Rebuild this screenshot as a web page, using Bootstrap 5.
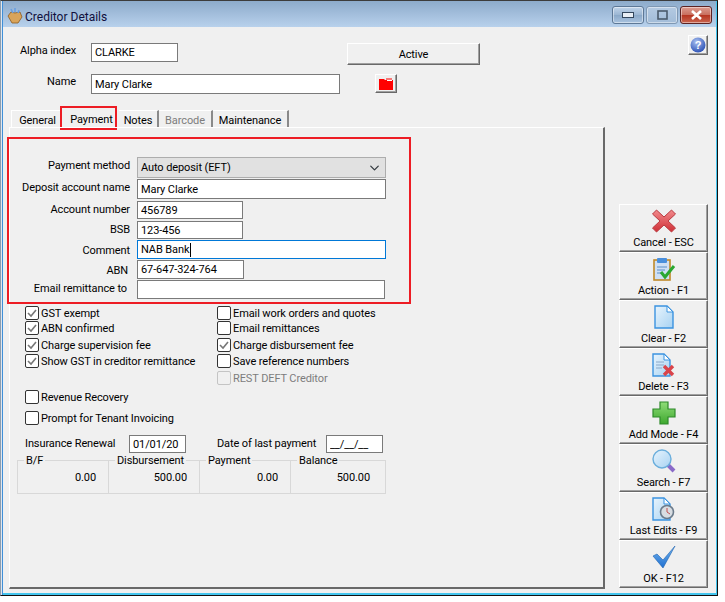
<!DOCTYPE html>
<html lang="en"><head><meta charset="utf-8"><title>Creditor Details</title>
<link rel="stylesheet" href="https://cdn.jsdelivr.net/npm/bootstrap@5.3.0/dist/css/bootstrap.min.css">
<style>
html,body{background:#fff;margin:0;height:602px;overflow:hidden}
body{font:11px/14px Roboto,"Liberation Sans",Arial,sans-serif;color:#000;letter-spacing:-.1px}
.win{background:#f0f0f0;border-top:1px solid #3c3c3c;border-right:1px solid #111;border-bottom:1px solid #111;border-left:1px solid #8a9db0;box-shadow:inset 1px 0 0 #dfe6ee,inset 2px 0 0 #3f8fd8,inset -1px 0 0 #43c5ee,inset 0 -2px 0 #43c5ee;box-sizing:content-box;width:716px;height:594px}
.tbar{flex:none;height:26px;background:linear-gradient(#8dabcb,#b8d1ec);padding:2px 0 0 3px;gap:1px;font-size:12px;letter-spacing:0;color:#10103c;margin-left:2px;margin-right:1px}
.tbar>svg{margin-top:2px}
.ttl{padding-top:4px}
.wbtn{width:32px;height:18px;border:1px solid #5d7896;border-radius:3px;background:linear-gradient(#c0d4ea 0,#9ab5d2 50%,#8aa8c8 50%,#a9c3df);box-shadow:inset 0 0 0 1px rgba(255,255,255,.45);margin-right:2px}
.wbtn.mx{background:linear-gradient(#b4cae2,#a2bcd8);border-color:#7f98b3}
.wbtn.cl{border-color:#5c2222;background:linear-gradient(#dd9c90 0,#c86e5e 50%,#b5331f 50%,#c9654f);margin-right:0}
.client{padding-left:2px;height:566px}
.client>*{flex:none}
.lab{width:73px;text-align:right;padding-top:1px}
.inp.form-control,.inp.form-select{border:1px solid #7a7a7a;border-radius:0;padding:0 0 0 3px;font-size:11px;letter-spacing:-.1px;line-height:14px;min-height:0;color:#000;background-color:#fff;box-shadow:none}
.inp.form-select{background-color:#e1e1e1;border-color:#adadad;padding-left:3px;background-position:right 4px center;background-size:13px 10px;height:21px}
.inp.form-control.focused{border-color:#0078d7;background:linear-gradient(#000,#000) no-repeat 52px 2px/1px 14px #fff}
.winbtn.btn{border-radius:0;padding:0;font-size:11px;letter-spacing:-.1px;line-height:14px;color:#000;background:#f0f0f0;border:1px solid;border-color:#fff #696969 #696969 #fff;box-shadow:inset -1px -1px 0 #a0a0a0}
.ab.btn{width:133px;height:22px;padding-top:1px}
.fold{width:22px;height:19px;margin-left:35px}
.help{width:20px;height:20px;margin:8px 9px 0 0}
.tabs{height:19px;padding-left:8px;margin-top:14px}
.tabs .nav-link{padding:1px 0 0;border:0;border-radius:0;color:#000;height:18px;line-height:18px;background:#f0f0f0;font-size:11px;border-right:2px solid #8a8a8a;border-top:1px solid #fff;text-align:center;margin-top:2px}
.tabs .nav-link.disabled{color:#7d7d7d}
.tabs .nav-item{margin:0}
.t1 .nav-link{width:49px;border-right:0;border-left:1px solid #fff;padding-left:3px}
.t2 .nav-link{width:53px;outline:2px solid #ed1c24;height:20px;margin:0 4px 0 2px;border-right:0;border-top:0;line-height:22px;padding-left:6px}
.t3 .nav-link{width:40px}.t4 .nav-link{width:54px}.t5 .nav-link{width:76px}
.pane{width:596px;height:462px;margin-left:6px;border-top:1px solid #fff;border-left:1px solid #fff;border-right:2px solid #696969;border-bottom:2px solid #696969}
.frame{margin-left:-3px;margin-top:9px;width:404px;height:167px;border:2px solid #ed1c24;padding-top:18px}
.flab{width:122px;text-align:right;flex:none;padding:2px 1px 0 0;white-space:nowrap}
.flab.dn{padding-top:4px}
.flab.e3{padding-right:3px}
.flab.e4{padding-right:4px}
.f{margin-left:6px}
.w250{width:249px}.w106{width:106px}
.cks{padding-left:15px}
.ck{height:16px;white-space:nowrap;padding-top:2px}
.ck .form-check-input{width:14px;height:14px;margin:-2px 2px 0 0;border:1px solid #333;border-radius:2px;background-color:#fff;float:none;flex:none;box-shadow:none}
.ck .form-check-input:checked{background-color:#fff;border-color:#333;background-size:12px;background-image:url("data:image/svg+xml,%3csvg xmlns='http://www.w3.org/2000/svg' viewBox='0 0 12 12'%3e%3cpath d='M2 6l3 3 5-6' fill='none' stroke='%23777' stroke-width='1.6'/%3e%3c/svg%3e")}
.ck.up{margin-top:-1px}
.ck.dn1{margin-top:1px}
.ck.off{color:#7d7d7d}
.ck.off .form-check-input{border-color:#c4c4c4;opacity:1;background-color:#f0f0f0}
.ckcol{width:192px}
.dates{margin-top:9px;padding-left:15px;height:18px;white-space:nowrap}
.dlab{padding-top:2px}
.dt{width:57px;height:18px;padding-top:2px}
.grp{display:grid;grid-template-columns:repeat(4,91px);margin:7px 0 0 7px;width:369px;height:34px;border:1px solid #d8d8d8}
.cell{border-right:1px solid #d8d8d8;position:relative;text-align:right;padding:10px 12px 0 0}
.cell:last-child{border-right:0}
.lg{position:absolute;left:6px;top:-7px;background:#f0f0f0;padding:0 2px;line-height:14px}
.side{margin-left:14px;padding-bottom:1px}
.sb.btn{width:89px;height:48px;display:flex;flex-direction:column;align-items:center;justify-content:flex-end;padding:0 0 1px;border-radius:0}
.sb svg{flex:none;margin-bottom:3px}
</style></head><body>
<div class="win d-flex flex-column">
<div class="tbar d-flex align-items-center">
<svg width="18" height="18" viewBox="0 0 18 18"><path d="M2 9l3-4 4 1 5-1 2 5-4 6H6z" fill="#d9a45a" stroke="#8a5a20" stroke-width=".8"/><path d="M5 2l2 4M9 1v4M13 3l-1 3" stroke="#6a9fe0" stroke-width="1.6"/></svg>
<span class="ttl">Creditor Details</span>
<div class="ms-auto d-flex gap-0 align-items-center pe-1">
<div class="wbtn d-flex align-items-center justify-content-center"><svg width="12" height="6"><rect x=".5" y=".5" width="11" height="5" fill="#e8eef5" stroke="#33465c"/></svg></div>
<div class="wbtn mx d-flex align-items-center justify-content-center"><svg width="11" height="10"><rect x="1" y="1" width="9" height="8" fill="none" stroke="#4a5a6c" stroke-width="1.6"/></svg></div>
<div class="wbtn cl d-flex align-items-center justify-content-center"><svg width="13" height="10"><path d="M2 1l9 8M11 1l-9 8" stroke="#fff" stroke-width="2.6"/></svg></div>
</div></div>
<div class="client d-flex flex-column">
<div class="d-flex">
<div class="flex-grow-1">
<div class="d-flex pt-3">
<div class="lab">Alpha index</div>
<input class="form-control inp" style="width:87px;height:19px;margin-left:15px" value="CLARKE">
<button class="btn winbtn ab" style="margin-left:169px">Active</button>
</div>
<div class="d-flex" style="margin-top:9px">
<div class="lab">Name</div>
<input class="form-control inp" style="width:249px;height:20px;margin-left:15px" value="Mary Clarke">
<button class="btn winbtn fold d-flex align-items-center justify-content-center"><svg width="16" height="14" viewBox="0 0 16 14"><path d="M1 2h5l1 1h8v10H1z" fill="#f00"/><path d="M8 2h6" stroke="#f00" stroke-width="1"/><path d="M9 3.5h5" stroke="#fff" stroke-width="1"/></svg></button>
</div>
</div>
<button class="btn winbtn help d-flex align-items-center justify-content-center"><svg width="16" height="16" viewBox="0 0 16 16"><defs><radialGradient id="hb" cx=".4" cy=".3" r=".8"><stop offset="0" stop-color="#a9c0f0"/><stop offset="1" stop-color="#1f46b0"/></radialGradient></defs><circle cx="8" cy="8" r="7.5" fill="url(#hb)"/><text x="8" y="12" text-anchor="middle" font-size="11" font-weight="700" fill="#fff" font-family="Liberation Sans">?</text></button>
</div>
<ul class="nav tabs flex-nowrap">
<li class="nav-item t1"><a class="nav-link" href="#">General</a></li>
<li class="nav-item t2"><a class="nav-link" href="#">Payment</a></li>
<li class="nav-item t3"><a class="nav-link" href="#">Notes</a></li>
<li class="nav-item t4"><a class="nav-link disabled" href="#">Barcode</a></li>
<li class="nav-item t5"><a class="nav-link" href="#">Maintenance</a></li>
</ul>
<div class="d-flex">
<div class="pane">
<div class="frame">
<div class="d-flex" style="height:22px"><div class="flab">Payment method</div><select class="form-select inp f w250"><option>Auto deposit (EFT)</option></select></div>
<div class="d-flex" style="height:22px"><div class="flab">Deposit account name</div><input class="form-control inp f w250" style="height:20px" value="Mary Clarke"></div>
<div class="d-flex" style="height:20px"><div class="flab">Account number</div><input class="form-control inp f w106" style="height:18px" value="456789"></div>
<div class="d-flex" style="height:19px"><div class="flab">BSB</div><input class="form-control inp f w106" style="height:18px" value="123-456"></div>
<div class="d-flex" style="height:20px"><div class="flab dn">Comment</div><input class="form-control inp f w250 focused" style="height:19px" value="NAB Bank"></div>
<div class="d-flex" style="height:20px"><div class="flab dn e3">ABN</div><input class="form-control inp f" style="height:19px;width:107px" value="67-647-324-764"></div>
<div class="d-flex" style="height:20px"><div class="flab e4">Email remittance to</div><input class="form-control inp f" style="height:19px;width:248px" value=""></div>
</div>
<div class="d-flex cks" style="margin-top:1px">
<div class="ckcol">
<label class="ck d-flex align-items-center"><input type="checkbox" class="form-check-input" checked>GST exempt</label>
<label class="ck up d-flex align-items-center"><input type="checkbox" class="form-check-input" checked>ABN confirmed</label>
<label class="ck dn1 d-flex align-items-center"><input type="checkbox" class="form-check-input" checked>Charge supervision fee</label>
<label class="ck d-flex align-items-center"><input type="checkbox" class="form-check-input" checked>Show GST in creditor remittance</label>
</div>
<div>
<label class="ck d-flex align-items-center"><input type="checkbox" class="form-check-input">Email work orders and quotes</label>
<label class="ck up d-flex align-items-center"><input type="checkbox" class="form-check-input">Email remittances</label>
<label class="ck dn1 d-flex align-items-center"><input type="checkbox" class="form-check-input" checked>Charge disbursement fee</label>
<label class="ck d-flex align-items-center"><input type="checkbox" class="form-check-input">Save reference numbers</label>
<label class="ck off dn1 d-flex align-items-center"><input type="checkbox" class="form-check-input" disabled>REST DEFT Creditor</label>
</div>
</div>
<div class="cks" style="margin-top:3px">
<label class="ck d-flex align-items-center"><input type="checkbox" class="form-check-input">Revenue Recovery</label>
<label class="ck d-flex align-items-center" style="margin-top:5px"><input type="checkbox" class="form-check-input">Prompt for Tenant Invoicing</label>
</div>
<div class="d-flex dates">
<div class="dlab" style="width:104px">Insurance Renewal</div>
<input class="form-control inp dt" value="01/01/20">
<div class="dlab" style="width:109px;margin-left:31px">Date of last payment</div>
<input class="form-control inp dt" value="__/__/__">
</div>
<div class="grp">
<div class="cell"><span class="lg">B/F</span>0.00</div>
<div class="cell"><span class="lg">Disbursement</span>500.00</div>
<div class="cell"><span class="lg">Payment</span>0.00</div>
<div class="cell"><span class="lg">Balance</span>500.00</div>
</div>
</div>
<div class="side d-flex flex-column justify-content-end">
<button class="btn winbtn sb"><svg width="24" height="24" viewBox="0 0 24 24"><defs><linearGradient id="gr" x1="0" y1="0" x2="0" y2="1"><stop offset="0" stop-color="#f28a8c"/><stop offset="1" stop-color="#cf2f36"/></linearGradient><linearGradient id="gg" x1="0" y1="0" x2="0" y2="1"><stop offset="0" stop-color="#8fdc78"/><stop offset="1" stop-color="#3ea82e"/></linearGradient><linearGradient id="gb" x1="0" y1="0" x2="0" y2="1"><stop offset="0" stop-color="#75b6f0"/><stop offset="1" stop-color="#1f6fd0"/></linearGradient><linearGradient id="gp" x1="0" y1="0" x2="1" y2="1"><stop offset="0" stop-color="#e8f4fd"/><stop offset="1" stop-color="#a7d2f2"/></linearGradient></defs><path d="M4.500 1l7.500 7 7.500-7 4 4-7.500 7 7.500 7-4 4-7.500-7-7.500 7-4-4 7.500-7-7.500-7z" fill="url(#gr)" stroke="#b83a40" stroke-width="1"/></svg>Cancel - ESC</button>
<button class="btn winbtn sb"><svg width="24" height="24" viewBox="0 0 24 24"><rect x="2" y="3" width="16" height="20" fill="#cfe0f5" stroke="#c08a2a" stroke-width="1.6"/><rect x="5" y="1" width="10" height="5" rx="1" fill="#4a8fdc"/><path d="M5 10h10M5 13h8M5 16h6" stroke="#5b8fc8"/><path d="M9 15l4 5 9-11" fill="none" stroke="#2aa832" stroke-width="3"/></svg>Action - F1</button>
<button class="btn winbtn sb"><svg width="24" height="24" viewBox="0 0 24 24"><path d="M3 1h12l6 6v16H3z" fill="url(#gp)" stroke="#3b93e0" stroke-width="1.4"/><path d="M15 1v6h6z" fill="#fff" stroke="#3b93e0"/></svg>Clear - F2</button>
<button class="btn winbtn sb"><svg width="24" height="24" viewBox="0 0 24 24"><path d="M1 1h11l6 6v16H1z" fill="url(#gp)" stroke="#3b93e0" stroke-width="1.4"/><path d="M12 1v6h6z" fill="#fff" stroke="#3b93e0"/><path d="M4 9h8M4 12h8M4 15h6" stroke="#8aa8c8"/><path d="M12 13l9 9M21 13l-9 9" stroke="#d9444a" stroke-width="3.4"/></svg>Delete - F3</button>
<button class="btn winbtn sb"><svg width="24" height="24" viewBox="0 0 24 24"><path d="M8 1h8v7h7v8h-7v7H8v-7H1V8h7z" fill="url(#gg)" stroke="#2e8a2a" stroke-width="1.2"/></svg>Add Mode - F4</button>
<button class="btn winbtn sb"><svg width="24" height="24" viewBox="0 0 24 24"><path d="M15 15l7 7" stroke="#8a6ac8" stroke-width="4"/><circle cx="10" cy="10" r="9" fill="url(#gp)" stroke="#6aaedc" stroke-width="1.4"/></svg>Search - F7</button>
<button class="btn winbtn sb"><svg width="24" height="24" viewBox="0 0 24 24"><path d="M1 1h11l6 6v16H1z" fill="url(#gp)" stroke="#3b93e0" stroke-width="1.4"/><path d="M12 1v6h6z" fill="#fff" stroke="#3b93e0"/><circle cx="15" cy="15" r="6.500" fill="#d8dde2" stroke="#6b7b8b" stroke-width="1.6"/><path d="M15 11v4l3 2" stroke="#c05050" fill="none"/></svg>Last Edits - F9</button>
<button class="btn winbtn sb"><svg width="24" height="24" viewBox="0 0 24 24"><path d="M1 11l4-2 6 6L23 1 11 23z" fill="url(#gb)" stroke="#1f63b0" stroke-width=".6"/></svg>OK - F12</button>
</div>
</div>
</div>
</div>
</body></html>
